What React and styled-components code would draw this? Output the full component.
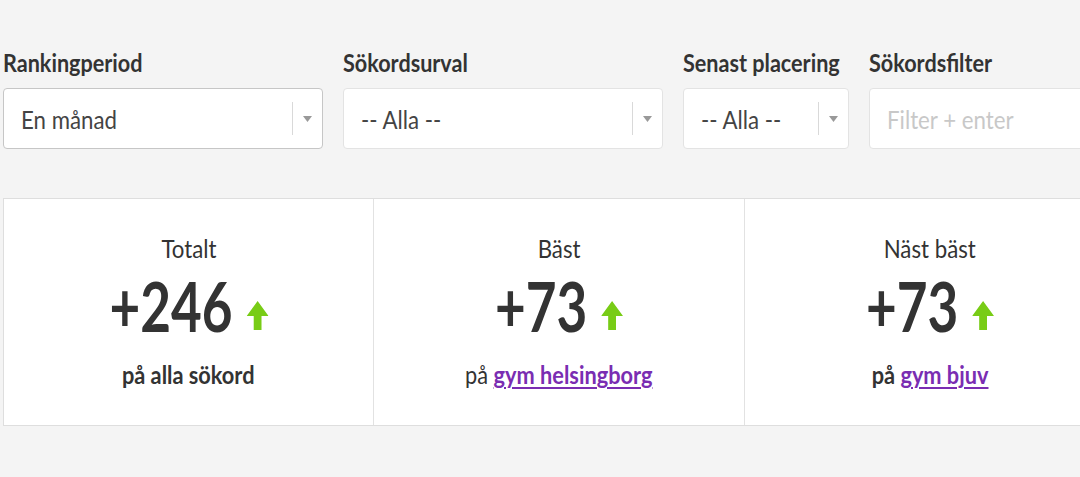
import React from "react";
import styled, { createGlobalStyle } from "styled-components";

const Global = createGlobalStyle`
  html, body { margin: 0; padding: 0; background: #f4f4f4; }
  body { font-family: Lato, "Open Sans", sans-serif; color: #333; overflow: hidden; }
`;

const Page = styled.div`
  width: 1080px;
  height: 477px;
  padding: 47px 0 0 3px;
  box-sizing: border-box;
  overflow: hidden;
`;

const Filters = styled.div`
  display: flex;
  gap: 20px;
  align-items: flex-start;
`;

const Field = styled.div`
  display: flex;
  flex-direction: column;
  width: ${(p) => p.$w}px;
  flex-shrink: 0;
`;

const Label = styled.label`
  font-size: 24px;
  font-weight: 700;
  color: #333;
  line-height: 32px;
  height: 32px;
  margin-bottom: 9px;
  white-space: nowrap;
  transform: scaleX(0.9);
  transform-origin: left center;
`;

const Box = styled.div`
  height: 61px;
  box-sizing: border-box;
  background: #fff;
  border: 1px solid ${(p) => (p.$focus ? "#c6c6c6" : "#e3e3e3")};
  border-radius: 4px;
  display: flex;
  align-items: center;
  padding-left: 17px;
`;

const Value = styled.span`
  flex: 1;
  font-size: 25px;
  line-height: 30px;
  color: ${(p) => (p.$placeholder ? "#c8c8c8" : "#444")};
  white-space: nowrap;
  transform: scaleX(0.89);
  transform-origin: left center;
`;

const Sep = styled.span`
  width: 1px;
  height: 33px;
  background: #d9d9d9;
`;

const Caret = styled.span`
  width: 29px;
  display: flex;
  justify-content: center;
  align-items: center;
`;

const Cards = styled.div`
  display: flex;
  margin-top: 49px;
  width: 1120px;
  height: 228px;
  background: #fff;
  border: 1px solid #dedede;
  box-sizing: border-box;
`;

const Card = styled.div`
  flex: 0 0 ${(p) => p.$w}px;
  box-sizing: border-box;
  border-left: ${(p) => (p.$first ? "none" : "1px solid #e2e2e2")};
  display: flex;
  flex-direction: column;
  align-items: center;
  padding-top: 34px;
`;

const Title = styled.div`
  font-size: 25px;
  line-height: 30px;
  color: #333;
  white-space: nowrap;
  transform: scaleX(0.89);
`;

const Big = styled.div`
  display: flex;
  align-items: flex-end;
  gap: 18px;
  margin-top: 9px;
  height: 68px;
  line-height: 68px;
  font-size: 68px;
  font-weight: 700;
  color: #333;
  white-space: nowrap;
  transform: scaleX(0.78);
`;

const ArrowWrap = styled.span`
  display: flex;
  margin-bottom: 10px;
`;

const Sub = styled.div`
  margin-top: 19px;
  font-size: 25px;
  line-height: 30px;
  color: #333;
  white-space: nowrap;
  font-weight: ${(p) => (p.$bold ? 700 : 400)};
  transform: scaleX(0.87);
`;

const Link = styled.a`
  color: #7a2db2;
  font-weight: 700;
  text-decoration: underline;
  text-decoration-thickness: 2px;
  text-underline-offset: 3px;
`;

const Arrow = () => (
  <ArrowWrap>
    <svg width="28" height="29" viewBox="0 0 28 29">
      <path d="M14 0 L28 15 L19 15 L19 29 L9 29 L9 15 L0 15 Z" fill="#78cc16" />
    </svg>
  </ArrowWrap>
);

const Tri = () => (
  <svg width="9" height="6" viewBox="0 0 9 6">
    <path d="M0 0 L9 0 L4.5 6 Z" fill="#999" />
  </svg>
);

const Select = ({ value, focus }) => (
  <Box $focus={focus}>
    <Value>{value}</Value>
    <Sep />
    <Caret>
      <Tri />
    </Caret>
  </Box>
);

export default function App() {
  return (
    <>
      <Global />
      <Page>
        <Filters>
          <Field $w={320}>
            <Label>Rankingperiod</Label>
            <Select value="En månad" focus />
          </Field>
          <Field $w={320}>
            <Label>Sökordsurval</Label>
            <Select value="-- Alla --" />
          </Field>
          <Field $w={166}>
            <Label>Senast placering</Label>
            <Select value="-- Alla --" />
          </Field>
          <Field $w={260}>
            <Label>Sökordsfilter</Label>
            <Box>
              <Value $placeholder>Filter + enter</Value>
            </Box>
          </Field>
        </Filters>
        <Cards>
          <Card $w={369} $first>
            <Title>Totalt</Title>
            <Big>
              +246
              <Arrow />
            </Big>
            <Sub $bold>på alla sökord</Sub>
          </Card>
          <Card $w={371}>
            <Title>Bäst</Title>
            <Big>
              +73
              <Arrow />
            </Big>
            <Sub>
              på <Link href="#">gym helsingborg</Link>
            </Sub>
          </Card>
          <Card $w={371}>
            <Title>Näst bäst</Title>
            <Big>
              +73
              <Arrow />
            </Big>
            <Sub $bold>
              på <Link href="#">gym bjuv</Link>
            </Sub>
          </Card>
        </Cards>
      </Page>
    </>
  );
}
